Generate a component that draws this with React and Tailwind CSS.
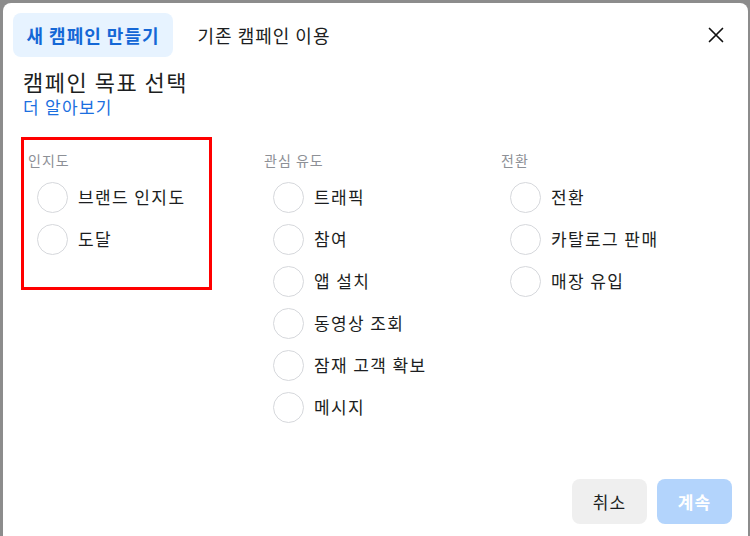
import React from 'react';

const groups = [
    { title: '인지도', items: ['브랜드 인지도', '도달'], highlight: true },
    { title: '관심 유도', items: ['트래픽', '참여', '앱 설치', '동영상 조회', '잠재 고객 확보', '메시지'] },
    { title: '전환', items: ['전환', '카탈로그 판매', '매장 유입'] },
];

const Radio = ({ label }) => (
    <label className="flex h-[42px] items-center pl-[9px]">
        <span className="h-[31px] w-[31px] shrink-0 rounded-full border border-[#d6d8dc] bg-white" />
        <span className="ml-[10px] text-[17px] leading-5 tracking-[1.4px] text-[#1c1e21]">{label}</span>
    </label>
);

const App = () => {
    return (
        <div className="h-[536px] w-[750px] overflow-hidden bg-[#8c8c8c] pl-[3px] pt-[3px] font-['Noto_Sans_CJK_KR','Noto_Sans',sans-serif]">
            <div className="flex h-[540px] w-[745px] flex-col rounded-lg bg-white">
                {/* tabs */}
                <div className="flex items-center px-[10px] pt-[10px]">
                    <button className="flex h-[44px] w-[160px] items-center justify-center rounded-lg bg-[#e7f3ff] text-[18px] font-bold tracking-[1px] text-[#1467d6]">
                        새 캠페인 만들기
                    </button>
                    <button className="ml-[11px] flex h-[44px] w-[160px] items-center justify-center text-[18px] tracking-[1px] text-[#1c1e21]">
                        기존 캠페인 이용
                    </button>
                    <button className="ml-auto mr-[7px] flex h-[30px] w-[30px] items-center justify-center">
                        <svg width="16" height="16" viewBox="0 0 16 16" fill="none" stroke="#111" strokeWidth="1.7" strokeLinecap="round">
                            <path d="M1.5 1.5 L14.5 14.5 M14.5 1.5 L1.5 14.5" />
                        </svg>
                    </button>
                </div>

                {/* heading */}
                <div className="mt-[11px] px-[20px]">
                    <h2 className="text-[22px] leading-[26px] tracking-[1.5px] text-[#1c1e21]">캠페인 목표 선택</h2>
                    <a className="mt-[3px] block text-[17px] leading-5 tracking-[1.3px] text-[#1b6fe0]">더 알아보기</a>
                </div>

                {/* objectives */}
                <div className="mt-[20px] ml-[18px] grid grid-cols-[236px_237px_1fr]">
                    {groups.map((g) => (
                        <div
                            key={g.title}
                            className={
                                g.highlight
                                    ? 'h-[153px] w-[191px] border-[3px] border-[#ff0000] px-1 pt-[10px]'
                                    : 'border-[3px] border-transparent px-1 pt-[10px]'
                            }
                        >
                            <div className="mb-[6px] text-[14px] leading-5 tracking-[1px] text-[#8d9096]">{g.title}</div>
                            {g.items.map((item) => (
                                <Radio key={item} label={item} />
                            ))}
                        </div>
                    ))}
                </div>

                {/* footer */}
                <div className="mt-auto flex justify-end gap-[10px] pb-[19px] pr-[16px]">
                    <button className="h-[45px] w-[75px] rounded-lg bg-[#efefef] text-[17px] tracking-[1px] text-[#1c1e21]">취소</button>
                    <button className="h-[45px] w-[75px] rounded-lg bg-[#b3d4fc] text-[17px] font-bold tracking-[1px] text-white">계속</button>
                </div>
            </div>
        </div>
    );
};

export default App;
